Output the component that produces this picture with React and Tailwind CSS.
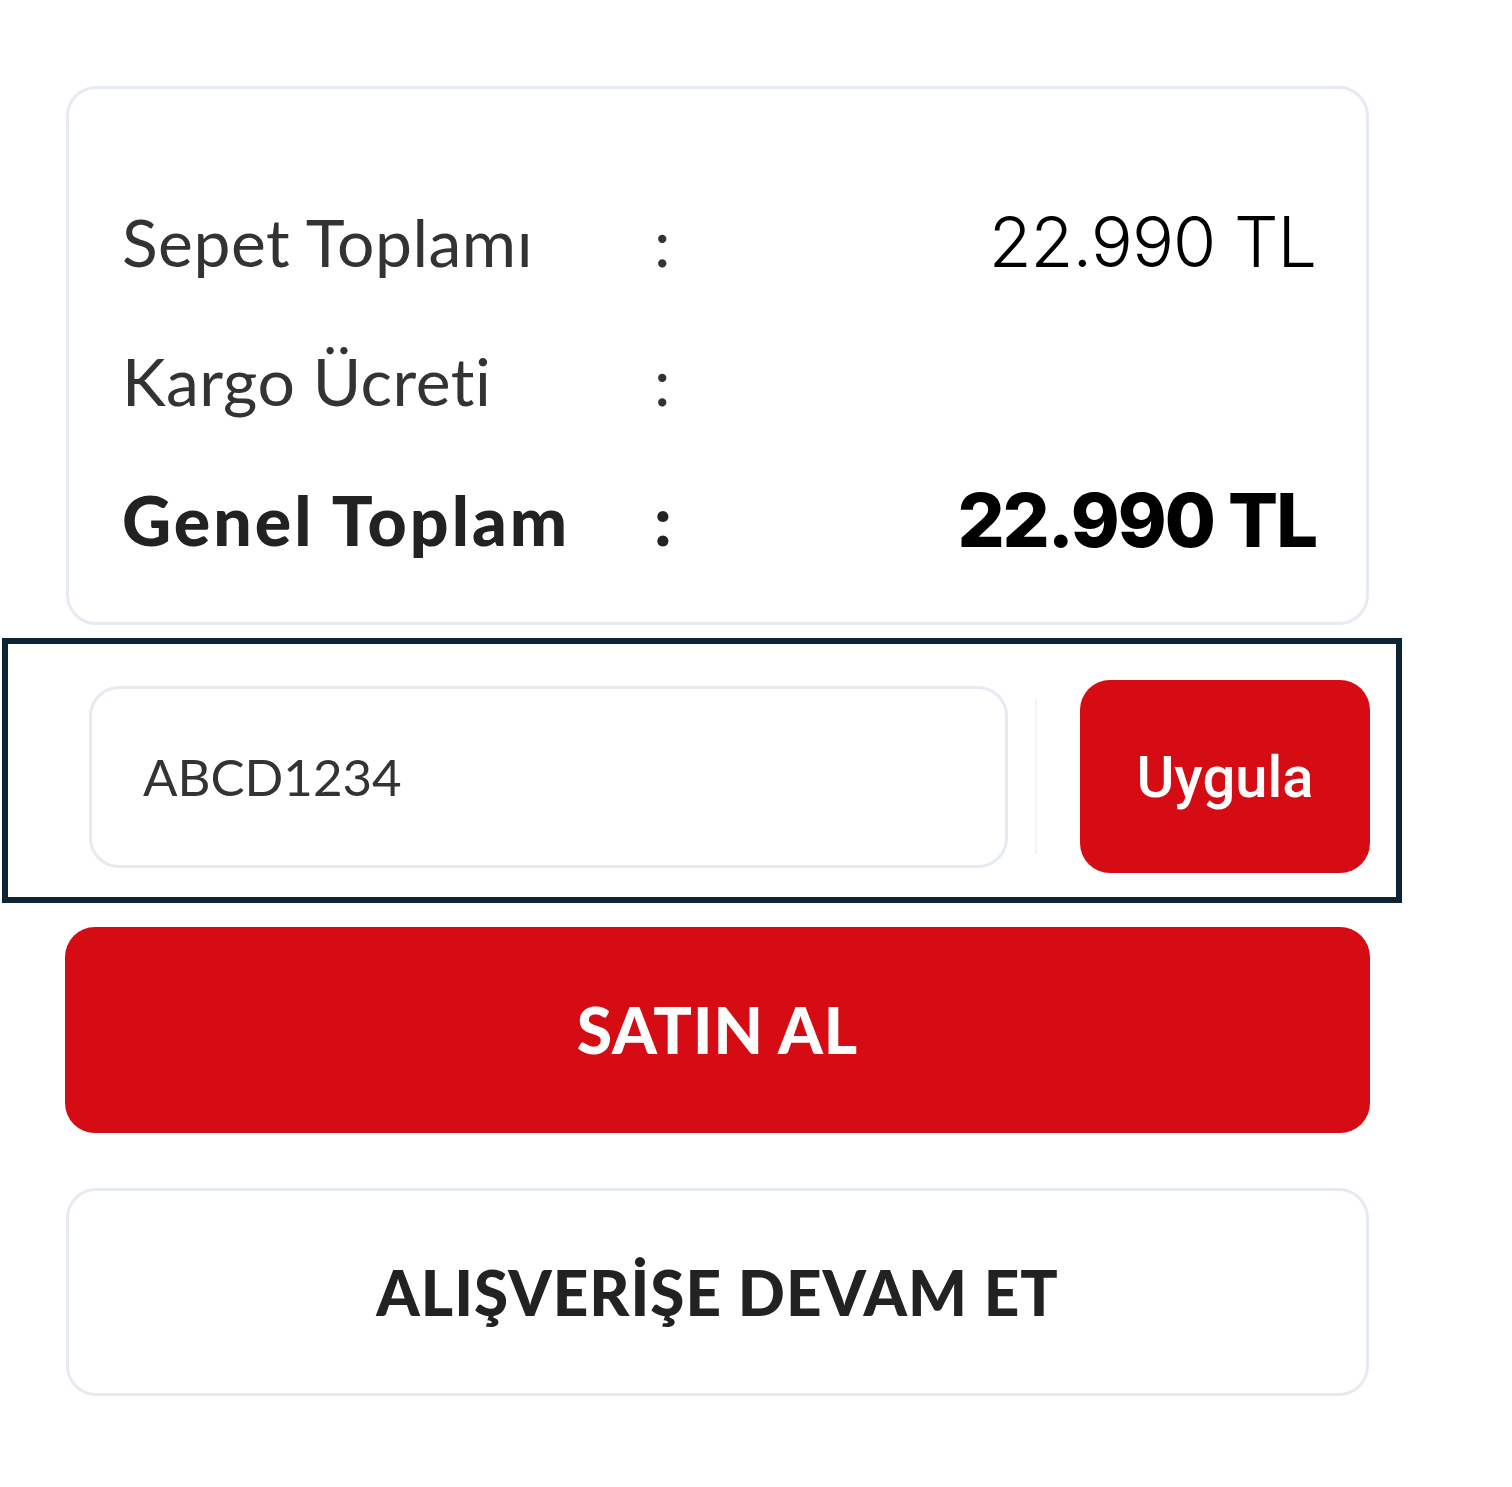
export default function App() {
  const label = "font-['Lato','Noto_Sans',sans-serif]";
  const num = "font-['Inter','Noto_Sans',sans-serif]";
  return (
    <div className="w-[1512px] h-[1487px] bg-white pt-[86px] flex flex-col">
      <div className="ml-[66px] w-[1303px] border-[3px] border-[#e6ebf1] rounded-[30px] pt-[83px] pb-[33px] pl-[53px] pr-[50px]">
        <div className="h-[139px] flex items-center">
          <div className={`${label} w-[532px] text-[66px] font-normal text-[#333] leading-none tracking-[0.5px]`}>Sepet Toplamı</div>
          <div className={`${label} text-[66px] text-[#333] leading-none`}>:</div>
          <div className={`${num} flex-1 text-right text-[70px] font-light text-black leading-none tracking-[-1px]`}>22.990 TL</div>
        </div>
        <div className="h-[139px] flex items-center">
          <div className={`${label} w-[532px] text-[66px] font-normal text-[#333] leading-none tracking-[0.5px]`}>Kargo Ücreti</div>
          <div className={`${label} text-[66px] text-[#333] leading-none`}>:</div>
          <div className="flex-1" />
        </div>
        <div className="h-[139px] flex items-center">
          <div className={`${label} w-[532px] text-[68px] font-black text-[#222] leading-none tracking-[3px]`}>Genel Toplam</div>
          <div className={`${label} text-[68px] font-black text-[#222] leading-none`}>:</div>
          <div className={`${num} flex-1 text-right text-[74px] font-extrabold text-black leading-none tracking-[-2px]`}>22.990 TL</div>
        </div>
      </div>

      <div className="mt-[13px] ml-[2px] w-[1400px] border-[6px] border-[#0c2435] pt-[36px] pb-[24px] pl-[81px] pr-[26px] flex items-center">
        <div className="w-[919px] h-[182px] border-[3px] border-[#e6ebf1] rounded-[30px] flex items-center pl-[51px]">
          <span className={`${label} text-[51px] text-[#333] leading-none`}>ABCD1234</span>
        </div>
        <div className="ml-[27px] w-[2px] h-[155px] bg-[#f1f3f6]" />
        <button className="ml-[43px] w-[290px] h-[193px] rounded-[30px] bg-[#d60c14] flex items-center justify-center">
          <span className="font-['Roboto',sans-serif] text-[58px] font-medium text-white leading-none">Uygula</span>
        </button>
      </div>

      <button className="mt-[24px] ml-[65px] w-[1305px] h-[206px] rounded-[30px] bg-[#d60c14] flex items-center justify-center">
        <span className={`${label} text-[64px] font-black text-white leading-none tracking-[1px]`}>SATIN AL</span>
      </button>

      <div className="mt-[55px] ml-[66px] w-[1303px] h-[208px] border-[3px] border-[#e6ebf1] rounded-[30px] flex items-center justify-center">
        <span className={`${label} text-[62px] font-black text-[#222] leading-none tracking-[1px]`}>ALIŞVERİŞE DEVAM ET</span>
      </div>
    </div>
  );
}
